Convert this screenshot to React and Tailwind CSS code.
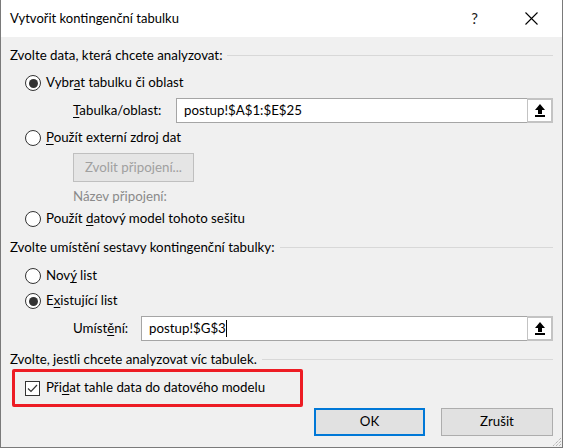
import React from 'react';

const font = { fontFamily: 'Lato, "Open Sans", sans-serif' };

const Radio = ({ checked }) => (
  <span className="w-4 h-4 shrink-0 rounded-full border border-[#333333] bg-white flex items-center justify-center">
    {checked && <span className="w-[9px] h-[9px] rounded-full bg-[#333333]" />}
  </span>
);

const Option = ({ checked, before, hot, after, className }) => (
  <div className={`flex items-center h-5 pl-[15px] ${className}`}>
    <Radio checked={checked} />
    <span className="ml-[5px]">
      {before}
      <span className="underline underline-offset-2">{hot}</span>
      {after}
    </span>
  </div>
);

const Heading = ({ children, className }) => (
  <div className={`flex items-center ${className}`}>
    <span>{children}</span>
    <span className="flex-1 h-px bg-[#d8d8d8] ml-[5px] mt-[-1px]" />
  </div>
);

const UploadIcon = () => (
  <svg width="12" height="14" viewBox="0 0 12 14">
    <polygon points="6,0 11,6 8,6 8,10 4,10 4,6 1,6" fill="#000" />
    <rect x="1" y="11" width="10" height="2" fill="#000" />
  </svg>
);

const RangeInput = ({ value, cursor }) => (
  <div className="flex-1 flex h-[25px] border border-[#a5a5a5] bg-white">
    <div className="flex-1 flex items-center pl-[7px]">
      {value}
      {cursor && <span className="w-px h-[17px] bg-black" />}
    </div>
    <div className="w-[26px] h-[25px] border-2 border-l border-[#c3c3c3] bg-white flex items-center justify-center mt-[-1px] mr-[-1px]">
      <UploadIcon />
    </div>
  </div>
);

export default function App() {
  return (
    <div
      style={font}
      className="relative w-[563px] h-[448px] flex flex-col bg-[#f0f0f0] text-[13.3px] text-black border-x border-b border-[#7a7a7a] overflow-hidden"
    >
      <div className="h-[37px] shrink-0 bg-white flex items-center pl-[9px] pr-[24px]">
        <span className="text-[13px] flex-1">Vytvořit kontingenční tabulku</span>
        <span className="text-[15px] text-[#222] mr-[47px]">?</span>
        <svg width="13" height="13" viewBox="0 0 13 13">
          <path d="M0.5 0.5 L12.5 12.5 M12.5 0.5 L0.5 12.5" stroke="#000" strokeWidth="1.1" />
        </svg>
      </div>

      <div className="flex flex-col pl-[9px] pr-[9px]">
        <Heading className="h-5 mt-[9px]">Zvolte data, která chcete analyzovat:</Heading>
        <Option className="mt-[7px]" checked before="Vybr" hot="a" after="t tabulku či oblast" />
        <div className="flex items-center mt-[5px] pl-[63px]">
          <span className="w-[103px]">
            <span className="underline underline-offset-2">T</span>abulka/oblast:
          </span>
          <RangeInput value="postup!$A$1:$E$25" />
        </div>
        <Option className="mt-[5px]" before="" hot="P" after="oužít externí zdroj dat" />
        <div className="pl-[63px] mt-[5px]">
          <div className="w-[121px] h-[29px] border border-[#bfbfbf] bg-[#e5e5e5] text-[#a0a0a0] flex items-center justify-center">
            Zvolit připojení...
          </div>
        </div>
        <div className="pl-[63px] mt-[5px] h-5 flex items-center text-[#8a8a8a]">Název připojení:</div>
        <Option className="mt-[2px]" before="Použít " hot="d" after="atový model tohoto sešitu" />

        <Heading className="h-5 mt-[9px]">Zvolte umístění sestavy kontingenční tabulky:</Heading>
        <Option className="mt-[8px]" before="Nov" hot="ý" after=" list" />
        <Option className="mt-[5px]" checked before="E" hot="x" after="istující list" />
        <div className="flex items-center mt-[5px] pl-[63px]">
          <span className="w-[68px]">
            Umíst<span className="underline underline-offset-2">ě</span>ní:
          </span>
          <RangeInput value="postup!$G$3" cursor />
        </div>

        <Heading className="h-[18px] mt-[10px]">Zvolte, jestli chcete analyzovat víc tabulek.</Heading>
        <div className="w-[291px] h-[38px] ml-[2px] border-[3px] border-[#ed1c24] rounded-[2px] flex items-center pl-[10px]">
          <span className="w-[15px] h-[15px] shrink-0 border border-[#333333] bg-white flex items-center justify-center">
            <svg width="11" height="9" viewBox="0 0 11 9">
              <path d="M1 4.5 L4 7.5 L10 1" stroke="#333" strokeWidth="1.2" fill="none" />
            </svg>
          </span>
          <span className="ml-[6px]">
            Při<span className="underline underline-offset-2">d</span>at tahle data do datového modelu
          </span>
        </div>

        <div className="flex justify-end gap-[16px] mt-[1px]">
          <div className="w-[111px] h-[28px] border-2 border-[#0078d7] bg-[#e1e1e1] flex items-center justify-center">OK</div>
          <div className="w-[112px] h-[28px] border border-[#adadad] bg-[#e1e1e1] flex items-center justify-center">Zrušit</div>
        </div>
      </div>

      <svg className="absolute right-0 bottom-0" width="12" height="12" viewBox="0 0 12 12">
        <path d="M11 3 L3 11 M11 6 L6 11 M11 9 L9 11" stroke="#9a9a9a" strokeWidth="1" strokeDasharray="1 1" />
      </svg>
    </div>
  );
}
